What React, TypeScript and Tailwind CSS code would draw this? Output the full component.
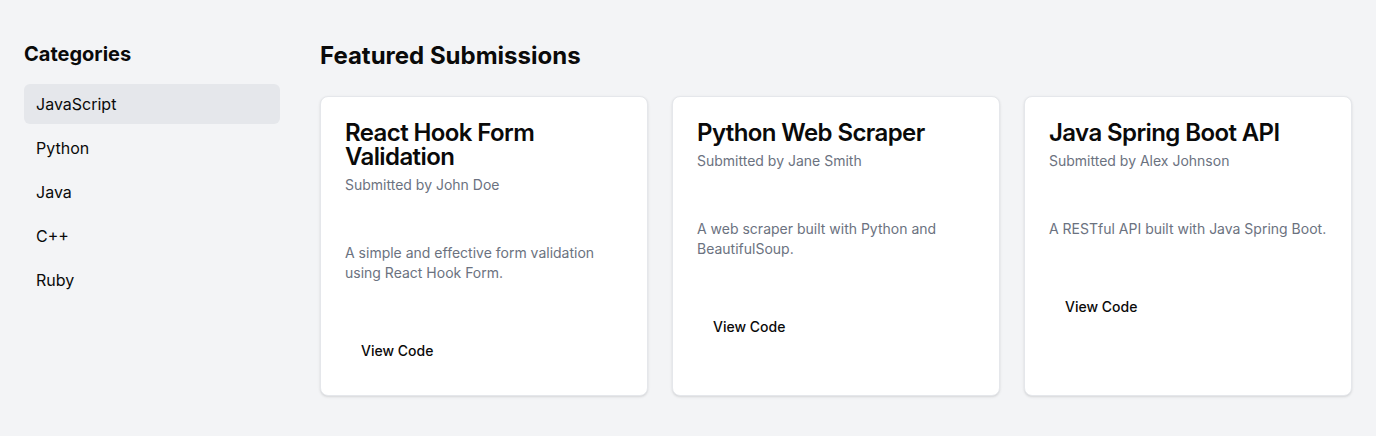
import React from "react";

const categories = ["JavaScript", "Python", "Java", "C++", "Ruby"];

const submissions = [
  {
    title: "React Hook Form Validation",
    author: "John Doe",
    description: "A simple and effective form validation using React Hook Form.",
  },
  {
    title: "Python Web Scraper",
    author: "Jane Smith",
    description: "A web scraper built with Python and BeautifulSoup.",
  },
  {
    title: "Java Spring Boot API",
    author: "Alex Johnson",
    description: "A RESTful API built with Java Spring Boot.",
  },
];

export default function App() {
  return (
    <div
      className="flex min-h-[436px] bg-[#f3f4f6] py-4 text-[#0a0a0a]"
      style={{ fontFamily: "Inter, 'Noto Sans', sans-serif" }}
    >
      <aside className="w-[304px] shrink-0 p-6">
        <h2 className="mb-4 text-xl font-bold">Categories</h2>
        <ul className="flex flex-col gap-1">
          {categories.map((c, i) => (
            <li
              key={c}
              className={`flex h-10 items-center rounded-md px-3 text-base ${
                i === 0 ? "bg-[#e5e7eb]" : ""
              }`}
            >
              {c}
            </li>
          ))}
        </ul>
      </aside>
      <main className="flex-1 py-6 pl-4 pr-6">
        <h1 className="mb-6 text-2xl font-bold">Featured Submissions</h1>
        <div className="grid grid-cols-3 gap-6">
          {submissions.map((s) => (
            <div
              key={s.title}
              className="flex flex-col rounded-lg border border-[#e5e7eb] bg-white shadow-sm"
            >
              <div className="flex flex-col gap-1.5 p-6">
                <h3 className="text-2xl font-semibold leading-none tracking-tight">
                  {s.title}
                </h3>
                <p className="text-sm text-[#6b7280]">Submitted by {s.author}</p>
              </div>
              <div className="p-6 pt-6">
                <p className="text-sm text-[#6b7280]">{s.description}</p>
              </div>
              <div className="flex items-center p-6">
                <button className="h-10 rounded-md px-4 text-sm font-medium">
                  View Code
                </button>
              </div>
            </div>
          ))}
        </div>
      </main>
    </div>
  );
}
